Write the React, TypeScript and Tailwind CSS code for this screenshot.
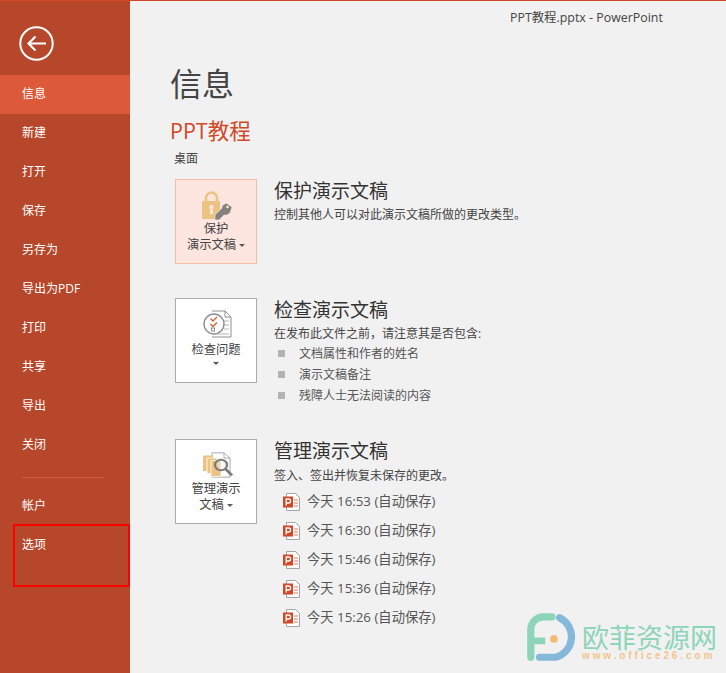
const FONT = "font-['Open_Sans','Noto_Sans_CJK_SC',sans-serif]";

function LockIcon() {
  return (
    <svg width="30" height="29" viewBox="0 0 30 29">
      <path d="M4 11V7a5.5 5.5 0 0 1 11 0v4" fill="none" stroke="#ecc382" strokeWidth="2.6" />
      <rect x="0" y="10" width="18" height="18" rx="1" fill="#ecc382" />
      <circle cx="9.5" cy="16" r="2.2" fill="#fde6df" />
      <path d="M8.6 17h1.8l.8 6H7.8z" fill="#fde6df" />
      <path d="M13 29V24L20 17V15L24 12L30 16L28 22L25 24H22L17 29z" fill="#85817e" stroke="#fde6df" strokeWidth="0.6" />
      <circle cx="25.5" cy="16" r="1.3" fill="#fde6df" />
    </svg>
  );
}

function InspectIcon() {
  return (
    <svg width="30" height="29" viewBox="0 0 30 29">
      <path d="M9 1h13l6 6v20H9" fill="#fff" stroke="#8e8e8e" />
      <path d="M22 1v6h6" fill="none" stroke="#8e8e8e" />
      <path d="M21 11h5M21 15h5M21 19h5M14 24h12" stroke="#b5b5b5" />
      <circle cx="11" cy="14" r="10" fill="#fff" stroke="#8e8e8e" strokeWidth="1.4" />
      <path d="M7.5 8.5l2.5 2.5 4-4M7.5 14l2.5 2.5 4-4" fill="none" stroke="#d9603c" strokeWidth="1.4" />
      <rect x="8.5" y="18" width="3" height="3" fill="none" stroke="#8e8e8e" />
    </svg>
  );
}

function ManageIcon() {
  return (
    <svg width="31" height="26" viewBox="0 0 31 30" preserveAspectRatio="none">
      <path d="M9 1h12l6 6v22H9z" fill="#fff" stroke="#a5a5a5" />
      <path d="M21 1v6h6" fill="none" stroke="#a5a5a5" />
      <rect x="0" y="4" width="10" height="18" fill="#ecc382" />
      <rect x="4" y="7" width="10" height="18" fill="#ecc382" stroke="#fff" strokeWidth="0.8" />
      <rect x="8" y="10" width="10" height="18" fill="#ecc382" stroke="#fff" strokeWidth="0.8" />
      <circle cx="18" cy="15" r="6" fill="#f4f4f4" fillOpacity="0.35" stroke="#7d7d7d" strokeWidth="2.4" />
      <path d="M22.5 19.5L29 27" stroke="#7d7d7d" strokeWidth="3" />
    </svg>
  );
}

function PptFile() {
  return (
    <svg width="17" height="18" viewBox="0 0 17 18">
      <path d="M3.5 .5h9l4 4v13h-13z" fill="#fff" stroke="#a5a5a5" />
      <path d="M11 7h4M11 10h4M11 13h4" stroke="#e0785c" />
      <rect x="0" y="3.5" width="10" height="11" fill="#d24726" />
      <path d="M3.2 12.5V6h2.4a1.9 1.9 0 0 1 0 4H3.2" fill="none" stroke="#fff" strokeWidth="1.3" />
    </svg>
  );
}

function Caret() {
  return <span className="inline-block w-0 h-0 border-x-[3px] border-x-transparent border-t-[3px] border-t-[#595959]" />;
}

function Watermark() {
  return (
    <div className="absolute left-[526px] top-[612px] w-[200px] h-[61px] flex items-start">
      <svg width="50" height="50" viewBox="0 0 52 52" className="shrink-0">
        <path d="M27 4H18A13 13 0 0 0 5 17V46" fill="none" stroke="#8dd5b8" strokeWidth="7.5" strokeLinecap="round" />
        <path d="M6 29H20" fill="none" stroke="#8dd5b8" strokeWidth="7" />
        <path d="M35 5A22 22 0 0 1 31 46H14" fill="none" stroke="#85b9dc" strokeWidth="7.5" strokeLinecap="round" />
        <circle cx="29" cy="27" r="4" fill="#f3bb7a" />
      </svg>
      <div className="ml-[6px] mt-[10px] flex flex-col">
        <div className="text-[27px] leading-[27px] text-[#8dd5b8] whitespace-nowrap font-['Noto_Sans_CJK_SC',sans-serif]">欧菲资源网</div>
        <div className="text-[10px] leading-[12px] font-bold tracking-[2.9px] whitespace-nowrap text-[#f3c48d] font-['Liberation_Sans',sans-serif]">www.office26.com</div>
      </div>
    </div>
  );
}

function ActionButton({ active, icon, children, mt }: { active?: boolean; icon: React.ReactNode; children: React.ReactNode; mt: string }) {
  return (
    <div className={`w-[82px] h-[85px] shrink-0 border flex flex-col items-center text-[12.3px] leading-[20px] text-[#444] ${active ? "bg-[#fde6df] border-[#f5bda8]" : "bg-white border-[#ababab]"}`}>
      <div className={mt}>{icon}</div>
      {children}
    </div>
  );
}

const MENU = ["信息", "新建", "打开", "保存", "另存为", "导出为PDF", "打印", "共享", "导出", "关闭"];
const SAVES = ["16:53", "16:30", "15:46", "15:36", "15:26"];
const BULLETS = ["文档属性和作者的姓名", "演示文稿备注", "残障人士无法阅读的内容"];

export default function App() {
  return (
    <div className={`relative w-[726px] h-[673px] overflow-hidden flex bg-[#f1f1f1] border-t border-[#d24726] ${FONT}`}>
      <aside className="w-[130px] h-full shrink-0 bg-[#b7472a] text-white text-[12px]">
        <div className="h-[74px] pl-[19px] pt-[25px]">
          <svg width="35" height="35" viewBox="0 0 35 35">
            <circle cx="17.5" cy="17.5" r="16.2" fill="none" stroke="#fff" strokeWidth="2" />
            <path d="M27 17.5H10M16.5 10.5l-7 7 7 7" fill="none" stroke="#fff" strokeWidth="2.2" />
          </svg>
        </div>
        {MENU.map((m, i) => (
          <div key={m} className={`h-[39px] pl-[22px] pb-[2px] flex items-center ${i === 0 ? "bg-[#dc5939]" : ""}`}>{m}</div>
        ))}
        <div className="mt-[12px] ml-[22px] w-[82px] h-px bg-[#d9593a]" />
        <div className="mt-[9px] h-[39px] pl-[22px] pb-[2px] flex items-center">帐户</div>
        <div className="h-[39px] pl-[22px] pb-[2px] flex items-center">选项</div>
      </aside>

      <main className="flex-1 text-[#444]">
        <div className="h-[34px] pt-[9px] pl-[380px] text-[12.4px] leading-[16px] whitespace-nowrap">PPT教程.pptx - PowerPoint</div>
        <div className="pl-[40px]">
          <h1 className="mt-[26px] text-[32px] leading-[46px] font-normal text-[#444]">信息</h1>
          <div className="mt-[9px] text-[21.5px] leading-[30px] text-[#d24726]">PPT教程</div>
          <div className="ml-[4px] mt-[4px] text-[12px] leading-[18px]">桌面</div>

          <div className="ml-[5px] mt-[11px] flex gap-[17px]">
            <ActionButton active icon={<LockIcon />} mt="mt-[11px] mb-[1px] ml-[2px]">
              <div className="leading-[16px]">保护</div>
              <div className="leading-[16px] flex items-center gap-[3px]">演示文稿<Caret /></div>
            </ActionButton>
            <div>
              <div className="mt-[-1px] text-[19px] leading-[26px] text-[#333]">保护演示文稿</div>
              <div className="mt-[2px] text-[12px] leading-[18px] whitespace-nowrap">控制其他人可以对此演示文稿所做的更改类型。</div>
            </div>
          </div>

          <div className="ml-[5px] mt-[34px] flex gap-[17px]">
            <ActionButton icon={<InspectIcon />} mt="mt-[11px] mb-[2px] ml-[4px]">
              <div className="leading-[18px]">检查问题</div>
              <div className="mt-[3px] leading-[3px] h-[3px] flex"><Caret /></div>
            </ActionButton>
            <div>
              <div className="mt-[-1px] text-[19px] leading-[26px] text-[#333]">检查演示文稿</div>
              <div className="mt-[2px] text-[12px] leading-[18px] whitespace-nowrap">在发布此文件之前，请注意其是否包含:</div>
              <ul>
                {BULLETS.map((b) => (
                  <li key={b} className="h-[21px] flex items-center text-[12px] text-[#555] whitespace-nowrap">
                    <span className="ml-[4px] w-[7px] h-[7px] bg-[#b3b3b3] mr-[14px]" />
                    {b}
                  </li>
                ))}
              </ul>
            </div>
          </div>

          <div className="ml-[5px] mt-[33px] flex gap-[17px]">
            <ActionButton icon={<ManageIcon />} mt="mt-[12px] mb-[-1px] ml-[5px]">
              <div className="leading-[18px] mt-[3px]">管理演示</div>
              <div className="leading-[14px] flex items-center gap-[3px]">文稿<Caret /></div>
            </ActionButton>
            <div>
              <div className="mt-[-1px] text-[19px] leading-[26px] text-[#333]">管理演示文稿</div>
              <div className="mt-[3px] text-[12px] leading-[18px] whitespace-nowrap">签入、签出并恢复未保存的更改。</div>
              <div className="mt-[2px] ml-[9px]">
                {SAVES.map((t) => (
                  <div key={t} className="h-[29px] flex items-center gap-[7px] text-[13.3px] text-[#555] whitespace-nowrap">
                    <PptFile />
                    今天 {t} (自动保存)
                  </div>
                ))}
              </div>
            </div>
          </div>
        </div>
      </main>

      <div className="absolute left-[13px] top-[523px] w-[117px] h-[63px] border-2 border-[#ff0000]" />
      <Watermark />
    </div>
  );
}
